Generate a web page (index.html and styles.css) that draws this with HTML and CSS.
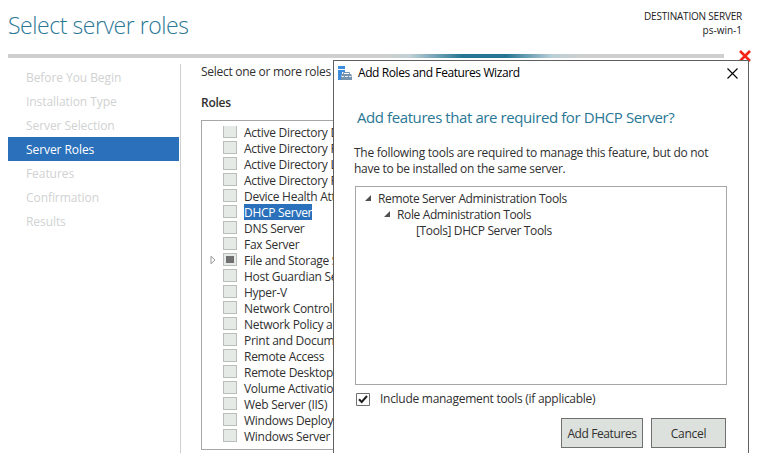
FILE: index.html
```html
<!DOCTYPE html>
<html lang="en">
<head>
<meta charset="utf-8">
<title>Add Roles and Features Wizard</title>
<link rel="stylesheet" href="styles.css">
</head>
<body>
<div class="wizard">
  <header class="header">
    <h1 class="title">Select server roles</h1>
    <div class="destination"><div class="dest-label">DESTINATION SERVER</div><div class="dest-name">ps-win-1</div></div>
  </header>
  <div class="progress"></div>
  <div class="body">
    <nav class="steps">
      <div class="step">Before You Begin</div>
      <div class="step">Installation Type</div>
      <div class="step">Server Selection</div>
      <div class="step current">Server Roles</div>
      <div class="step">Features</div>
      <div class="step">Confirmation</div>
      <div class="step">Results</div>
    </nav>
    <main class="content">
      <p class="intro">Select one or more roles</p>
      <h2 class="roles-title">Roles</h2>
      <div class="roles">
        <div class="role first"><i class="box"></i><span>Active Directory D</span></div>
        <div class="role"><i class="box"></i><span>Active Directory F</span></div>
        <div class="role"><i class="box"></i><span>Active Directory L</span></div>
        <div class="role"><i class="box"></i><span>Active Directory R</span></div>
        <div class="role"><i class="box"></i><span>Device Health Att</span></div>
        <div class="role selected"><i class="box"></i><span>DHCP Server</span></div>
        <div class="role"><i class="box"></i><span>DNS Server</span></div>
        <div class="role"><i class="box"></i><span>Fax Server</span></div>
        <div class="role partial"><svg class="expander" width="6" height="10" viewBox="0 0 6 10"><path d="M1 1.2 5 5 1 8.8Z" fill="none" stroke="#999"/></svg><i class="box"></i><span>File and Storage S</span></div>
        <div class="role"><i class="box"></i><span>Host Guardian Se</span></div>
        <div class="role"><i class="box"></i><span>Hyper-V</span></div>
        <div class="role"><i class="box"></i><span>Network Controll</span></div>
        <div class="role"><i class="box"></i><span>Network Policy a</span></div>
        <div class="role"><i class="box"></i><span>Print and Docum</span></div>
        <div class="role"><i class="box"></i><span>Remote Access</span></div>
        <div class="role"><i class="box"></i><span>Remote Desktop</span></div>
        <div class="role"><i class="box"></i><span>Volume Activatio</span></div>
        <div class="role"><i class="box"></i><span>Web Server (IIS)</span></div>
        <div class="role"><i class="box"></i><span>Windows Deploy</span></div>
        <div class="role"><i class="box"></i><span>Windows Server</span></div>
      </div>
    </main>
  </div>
</div>
<svg class="red-x" width="12" height="12" viewBox="0 0 12 12"><path d="M1 1 11 11M11 1 1 11" stroke="#f52218" stroke-width="2.6"/></svg>
<section class="dialog">
  <div class="titlebar">
    <svg class="app-icon" width="14" height="15" viewBox="0 0 14 15"><path fill="#3c8ddd" d="M0 0h7v3H0zM0 4h7v2H4v3H3v5H0z"/><path d="M5.500 8.500V6.500h6v2" fill="none" stroke="#7593ad"/><path fill="#7593ad" d="M4 8h9l1 2v4H3v-4z"/><path d="M3.500 10.500h2.500M7 10.500h3M11 10.500h2.500" stroke="#e8eef3"/></svg>
    <span class="dialog-title">Add Roles and Features Wizard</span>
    <svg class="close" width="11" height="11" viewBox="0 0 11 11"><path d="M.5.5 10.5 10.5M10.5.5.5 10.5" stroke="#000" stroke-width="1.1"/></svg>
  </div>
  <h2 class="question">Add features that are required for DHCP Server?</h2>
  <p class="explain">The following tools are required to manage this feature, but do not<br>have to be installed on the same server.</p>
  <div class="tree">
    <div class="node"><i class="tri"></i><span>Remote Server Administration Tools</span></div>
    <div class="node level2"><i class="tri"></i><span>Role Administration Tools</span></div>
    <div class="node level3"><span>[Tools] DHCP Server Tools</span></div>
  </div>
  <div class="include"><svg width="14" height="13" viewBox="0 0 14 13"><path d="M.5.5h13v12H.5z" fill="#fff" stroke="#707070"/><path d="M3 6.2 5.7 9 11 3" fill="none" stroke="#202020" stroke-width="2"/></svg><span>Include management tools (if applicable)</span></div>
  <div class="actions"><button class="btn add">Add Features</button><button class="btn cancel">Cancel</button></div>
</section>
</body>
</html>
```
FILE: styles.css
```css
* { box-sizing: border-box; }
body { margin: 0; width: 763px; height: 453px; overflow: hidden; position: relative; background: #fff; color: #303030; font: 12px/16px "Open Sans", "Noto Sans", sans-serif; letter-spacing: -0.28px; white-space: nowrap; }
h1, h2, p { margin: 0; font-weight: 400; }
i { display: block; flex: none; }
.header { height: 54px; padding: 0 21px 0 8px; display: flex; justify-content: space-between; }
.title { font-size: 23px; line-height: 32px; padding-top: 9px; color: #2a7795; font-weight: 300; letter-spacing: -0.45px; }
.destination { padding-top: 10px; text-align: right; font-size: 10px; line-height: 13px; color: #222; letter-spacing: -0.2px; }
.dest-name { letter-spacing: 0; padding-top: 1px; }
.progress { height: 4px; width: 716px; margin-left: 8px; background: linear-gradient(90deg, #cdd0cd 380px, #bfd0d5 402px, #257594 454px, #257594 498px, #b9cfd7 544px, #cdd0cd 572px); }
.body { display: flex; padding-left: 8px; }
.steps { width: 173px; height: 389px; margin-top: 6px; padding-top: 1px; border-right: 1px solid #cdd0cd; }
.step { height: 24px; width: 171px; padding-left: 18px; line-height: 25px; color: #d0d2d2; letter-spacing: -0.07px; }
.step.current { background: #2b70ba; color: #fff; }
.content { width: 152px; padding-left: 20px; overflow: hidden; }
.intro { padding-top: 6px; }
.roles-title { margin-top: 15px; font-size: 12px; line-height: 16px; font-weight: 600; }
.roles { height: 330px; margin-top: 9px; border: 1px solid #a6a6a6; border-right: 0; padding-top: 3px; overflow: hidden; }
.role { display: flex; height: 16px; padding-left: 21px; position: relative; }
.box { width: 14px; height: 13px; margin: 1px 7px 0 0; border: 1px solid #b9beba; background: #e5eae6; }
.first .box { border-top: 0; height: 12px; margin-top: 2px; }
.role span { line-height: 17px; }
.selected span { background: #2b70ba; color: #fff; width: 68px; height: 16px; }
.partial .box { padding: 2px; }
.partial .box::before { content: ""; display: block; width: 8px; height: 7px; background: #707070; }
.expander { position: absolute; left: 8px; top: 3px; }
.red-x { position: absolute; left: 739px; top: 50px; }
.dialog { position: absolute; left: 333px; top: 60px; width: 416px; height: 400px; border: 1px solid #606060; background: #fff; }
.titlebar { height: 24px; display: flex; align-items: center; padding: 0 10px 0 4px; color: #000; letter-spacing: -0.41px; }
.dialog-title { margin-left: 6px; flex: 1; }
.question { font-size: 15px; line-height: 22px; margin: 21px 0 0 23px; color: #2a7795; letter-spacing: -0.41px; }
.explain { margin: 17px 0 0 20px; }
.tree { width: 372px; height: 199px; border: 1px solid #a6a6a6; margin: 9px 0 0 21px; padding-top: 4px; letter-spacing: -0.37px; }
.node { height: 16px; display: flex; padding-left: 9px; }
.level2 { padding-left: 28px; }
.level3 { padding-left: 60px; }
.tri { width: 6px; height: 6px; background: #505050; clip-path: polygon(100% 0, 100% 100%, 0 100%); margin: 4px 7px 0 0; }
.include { display: flex; margin: 6px 0 0 22px; align-items: center; }
.include span { margin-left: 10px; }
.actions { display: flex; gap: 8px; margin: 11px 0 0 227px; }
.btn { width: 82px; height: 30px; padding: 2px 0 0; border: 1px solid #707070; background: #dde1dd; font: inherit; color: #303030; letter-spacing: inherit; }
.add { letter-spacing: -0.4px; }
.cancel { width: 75px; }
```
